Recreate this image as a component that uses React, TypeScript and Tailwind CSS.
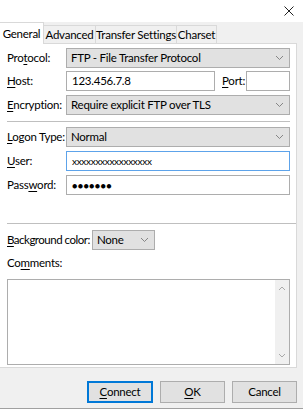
import React from "react";

const U = ({ children }: { children: React.ReactNode }) => (
  <span className="underline underline-offset-2 decoration-1">{children}</span>
);

const Chevron = () => (
  <svg width="9" height="6" viewBox="0 0 9 6" className="shrink-0">
    <path d="M1 1 L4.5 4.5 L8 1" fill="none" stroke="#7a7a7a" strokeWidth="0.9" />
  </svg>
);

const Select = ({ value, className = "" }: { value: string; className?: string }) => (
  <div
    className={
      "h-[20px] bg-[#e1e1e1] border border-[#adadad] flex items-center justify-between pl-[4px] pr-[5px] whitespace-nowrap " +
      className
    }
  >
    <span>{value}</span>
    <Chevron />
  </div>
);

const Label = ({ children, className = "" }: { children: React.ReactNode; className?: string }) => (
  <div className={"w-[59px] shrink-0 whitespace-nowrap " + className}>{children}</div>
);

export default function App() {
  return (
    <div
      className="w-[303px] h-[415px] bg-[#f0f0f0] flex flex-col overflow-hidden text-[11.5px] tracking-[-0.25px] leading-none text-black"
      style={{ fontFamily: 'Lato, "Noto Sans", sans-serif' }}
    >
      {/* title bar */}
      <div className="h-[22px] bg-white flex items-center justify-end pr-[9px] shrink-0">
        <svg width="10" height="10" viewBox="0 0 10 10">
          <path d="M0.5 0.5 L9.5 9.5 M9.5 0.5 L0.5 9.5" stroke="#222" strokeWidth="1" />
        </svg>
      </div>

      {/* tabs */}
      <div className="h-[21px] flex items-end shrink-0 relative z-10 whitespace-nowrap">
        <div className="h-[22px] w-[44px] bg-white border border-b-0 border-[#d9d9d9] border-l-0 flex items-center justify-center -mb-px">
          General
        </div>
        <div className="h-[18px] w-[52px] border border-l-0 border-b-0 border-[#d9d9d9] flex items-center justify-center">
          Advanced
        </div>
        <div className="h-[18px] w-[81px] border border-l-0 border-b-0 border-[#d9d9d9] flex items-center justify-center">
          Transfer Settings
        </div>
        <div className="h-[18px] w-[40px] border border-l-0 border-b-0 border-[#d9d9d9] flex items-center justify-center">
          Charset
        </div>
      </div>

      {/* tab page */}
      <div className="w-[297px] h-[325px] bg-white border border-l-0 border-[#d9d9d9] shrink-0 flex flex-col pl-[7px] pr-[6px] pt-[4px]">
        <div className="flex items-center h-[20px]">
          <Label>
            Pro<U>t</U>ocol:
          </Label>
          <Select value="FTP - File Transfer Protocol" className="flex-1" />
        </div>
        <div className="flex items-center h-[20px] mt-[3px]">
          <Label>
            <U>H</U>ost:
          </Label>
          <div className="h-[20px] w-[149px] border border-[#adadad] bg-white flex items-center pl-[5px]">
            123.456.7.8
          </div>
          <div className="w-[31px] pl-[7px] whitespace-nowrap">
            <U>P</U>ort:
          </div>
          <div className="h-[20px] flex-1 border border-[#adadad] bg-white" />
        </div>
        <div className="flex items-center h-[20px] mt-[4px]">
          <Label>
            <U>E</U>ncryption:
          </Label>
          <Select value="Require explicit FTP over TLS" className="flex-1" />
        </div>

        <div className="h-px bg-[#bfbfbf] mt-[6px]" />

        <div className="flex items-center h-[20px] mt-[5px]">
          <Label>
            <U>L</U>ogon Type:
          </Label>
          <Select value="Normal" className="flex-1" />
        </div>
        <div className="flex items-center h-[20px] mt-[4px]">
          <Label>
            <U>U</U>ser:
          </Label>
          <div className="h-[20px] flex-1 border border-[#5da3ea] bg-white flex items-center pl-[5px] text-[10px] tracking-[-0.3px]">
            xxxxxxxxxxxxxxxxx
          </div>
        </div>
        <div className="flex items-center h-[20px] mt-[4px]">
          <Label>
            Pass<U>w</U>ord:
          </Label>
          <div className="h-[20px] flex-1 border border-[#adadad] bg-white flex items-center pl-[5px] text-[9px] tracking-[0.3px]">
            ●●●●●●●
          </div>
        </div>

        <div className="h-px bg-[#bfbfbf] mt-[28px] -mr-[6px]" />

        <div className="flex items-center h-[19px] mt-[6px]">
          <div className="w-[85px] shrink-0 whitespace-nowrap tracking-[-0.5px]">
            <U>B</U>ackground color:
          </div>
          <Select value="None" className="w-[63px] h-[19px]" />
        </div>
        <div className="mt-[8px] h-[12px] whitespace-nowrap">
          Co<U>m</U>ments:
        </div>
        <div className="mt-[10px] h-[86px] border border-[#adadad] bg-white flex justify-end">
          <div className="w-[14px] h-full bg-[#f0f0f0] flex flex-col items-center justify-between py-[6px]">
            <svg width="8" height="5" viewBox="0 0 8 5">
              <path d="M1 4 L4 1 L7 4" fill="none" stroke="#a0a0a0" strokeWidth="0.9" />
            </svg>
            <svg width="8" height="5" viewBox="0 0 8 5">
              <path d="M1 1 L4 4 L7 1" fill="none" stroke="#a0a0a0" strokeWidth="0.9" />
            </svg>
          </div>
        </div>
      </div>

      {/* buttons */}
      <div className="flex justify-end gap-[7px] pr-[6px] mt-[13px] shrink-0">
        <button className="w-[66px] h-[22px] bg-[#e1e1e1] border-2 border-[#0078d7] flex items-center justify-center">
          <U>C</U>onnect
        </button>
        <button className="w-[65px] h-[22px] bg-[#e1e1e1] border border-[#adadad] flex items-center justify-center">
          <U>O</U>K
        </button>
        <button className="w-[65px] h-[22px] bg-[#e1e1e1] border border-[#adadad] flex items-center justify-center">
          Cancel
        </button>
      </div>
      <div className="mt-[5px] h-px bg-[#a0a0a0] shrink-0" />
      <div className="flex-1 bg-white" />
    </div>
  );
}
